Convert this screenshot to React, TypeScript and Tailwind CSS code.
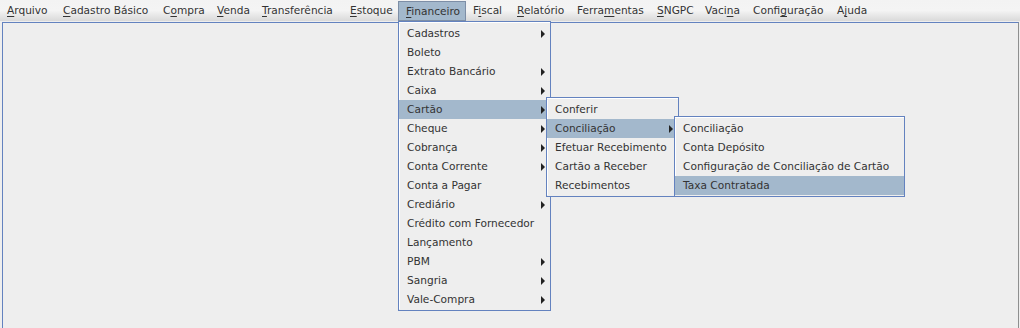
const menus = [
  { label: "Arquivo", u: 0, w: 56 },
  { label: "Cadastro Básico", u: 0, w: 100 },
  { label: "Compra", u: 1, w: 54 },
  { label: "Venda", u: 0, w: 45 },
  { label: "Transferência", u: 0, w: 88 },
  { label: "Estoque", u: 0, w: 55 },
  { label: "Financeiro", u: 0, w: 68 },
  { label: "Fiscal", u: 1, w: 44 },
  { label: "Relatório", u: 0, w: 60 },
  { label: "Ferramentas", u: 5, w: 80 },
  { label: "SNGPC", u: 0, w: 48 },
  { label: "Vacina", u: 4, w: 48 },
  { label: "Configuração", u: 5, w: 84 },
  { label: "Ajuda", u: 1, w: 46 },
];

type Item = { label: string; sub?: boolean; active?: boolean };

const financeiro: Item[] = [
  { label: "Cadastros", sub: true },
  { label: "Boleto" },
  { label: "Extrato Bancário", sub: true },
  { label: "Caixa", sub: true },
  { label: "Cartão", sub: true, active: true },
  { label: "Cheque", sub: true },
  { label: "Cobrança", sub: true },
  { label: "Conta Corrente", sub: true },
  { label: "Conta a Pagar" },
  { label: "Crediário", sub: true },
  { label: "Crédito com Fornecedor" },
  { label: "Lançamento" },
  { label: "PBM", sub: true },
  { label: "Sangria", sub: true },
  { label: "Vale-Compra", sub: true },
];

const cartao: Item[] = [
  { label: "Conferir" },
  { label: "Conciliação", sub: true, active: true },
  { label: "Efetuar Recebimento" },
  { label: "Cartão a Receber" },
  { label: "Recebimentos" },
];

const conciliacao: Item[] = [
  { label: "Conciliação" },
  { label: "Conta Depósito" },
  { label: "Configuração de Conciliação de Cartão" },
  { label: "Taxa Contratada", active: true },
];

function Mnemonic({ label, u }: { label: string; u: number }) {
  return (
    <span>
      {label.slice(0, u)}
      <span className="underline decoration-1 underline-offset-2">{label[u]}</span>
      {label.slice(u + 1)}
    </span>
  );
}

function Arrow() {
  return (
    <svg width="4" height="8" viewBox="0 0 4 8" className="shrink-0">
      <path d="M0 0 L4 4 L0 8 Z" fill="#222" />
    </svg>
  );
}

// popup menus sit over the desktop, so they are positioned
function Popup({ items, className }: { items: Item[]; className: string }) {
  return (
    <div className={`absolute flex flex-col border border-[#6382bf] bg-[#eeeeee] pt-[2px] pb-px shadow-[inset_0_1px_0_#ffffff] ${className}`}>
      {items.map((it) => (
        <div
          key={it.label}
          className={`flex items-center h-[19px] pl-[7px] pr-[5px] border-l ${
            it.active ? "bg-[#a3b8cc] border-[#a3b8cc]" : "border-white"
          }`}
        >
          <span className="flex-1 whitespace-nowrap">{it.label}</span>
          {it.sub && <Arrow />}
        </div>
      ))}
    </div>
  );
}

export default function App() {
  return (
    <div
      className="relative flex flex-col w-[1020px] h-[328px] overflow-hidden bg-[#eeeeee] text-[10.6px] text-[#333333] leading-[19px]"
      style={{ fontFamily: '"DejaVu Sans", sans-serif' }}
    >
      {/* menu bar */}
      <div className="flex shrink-0 h-[21px] bg-gradient-to-b from-[#f3f3f3] via-[#f4f4f4] to-[#d9d9d9]">
        {menus.map((m) => (
          <div
            key={m.label}
            style={{ width: m.w }}
            className={`shrink-0 h-[20px] mt-px pl-[7px] whitespace-nowrap leading-[19px] ${
              m.label === "Financeiro" ? "bg-[#a3b8cc] border border-[#7d8ea6] pl-[6px]" : ""
            }`}
          >
            <Mnemonic label={m.label} u={m.u} />
          </div>
        ))}
      </div>

      {/* desktop area */}
      <div className="flex-1 ml-[2px] mr-px mt-px border-l border-t border-r border-[#6382bf] border-r-[#8e8f8f]" />

      <Popup items={financeiro} className="left-[398px] top-[21px] w-[153px]" />
      <Popup items={cartao} className="left-[546px] top-[97px] w-[133px]" />
      <Popup items={conciliacao} className="left-[674px] top-[116px] w-[231px]" />
    </div>
  );
}
